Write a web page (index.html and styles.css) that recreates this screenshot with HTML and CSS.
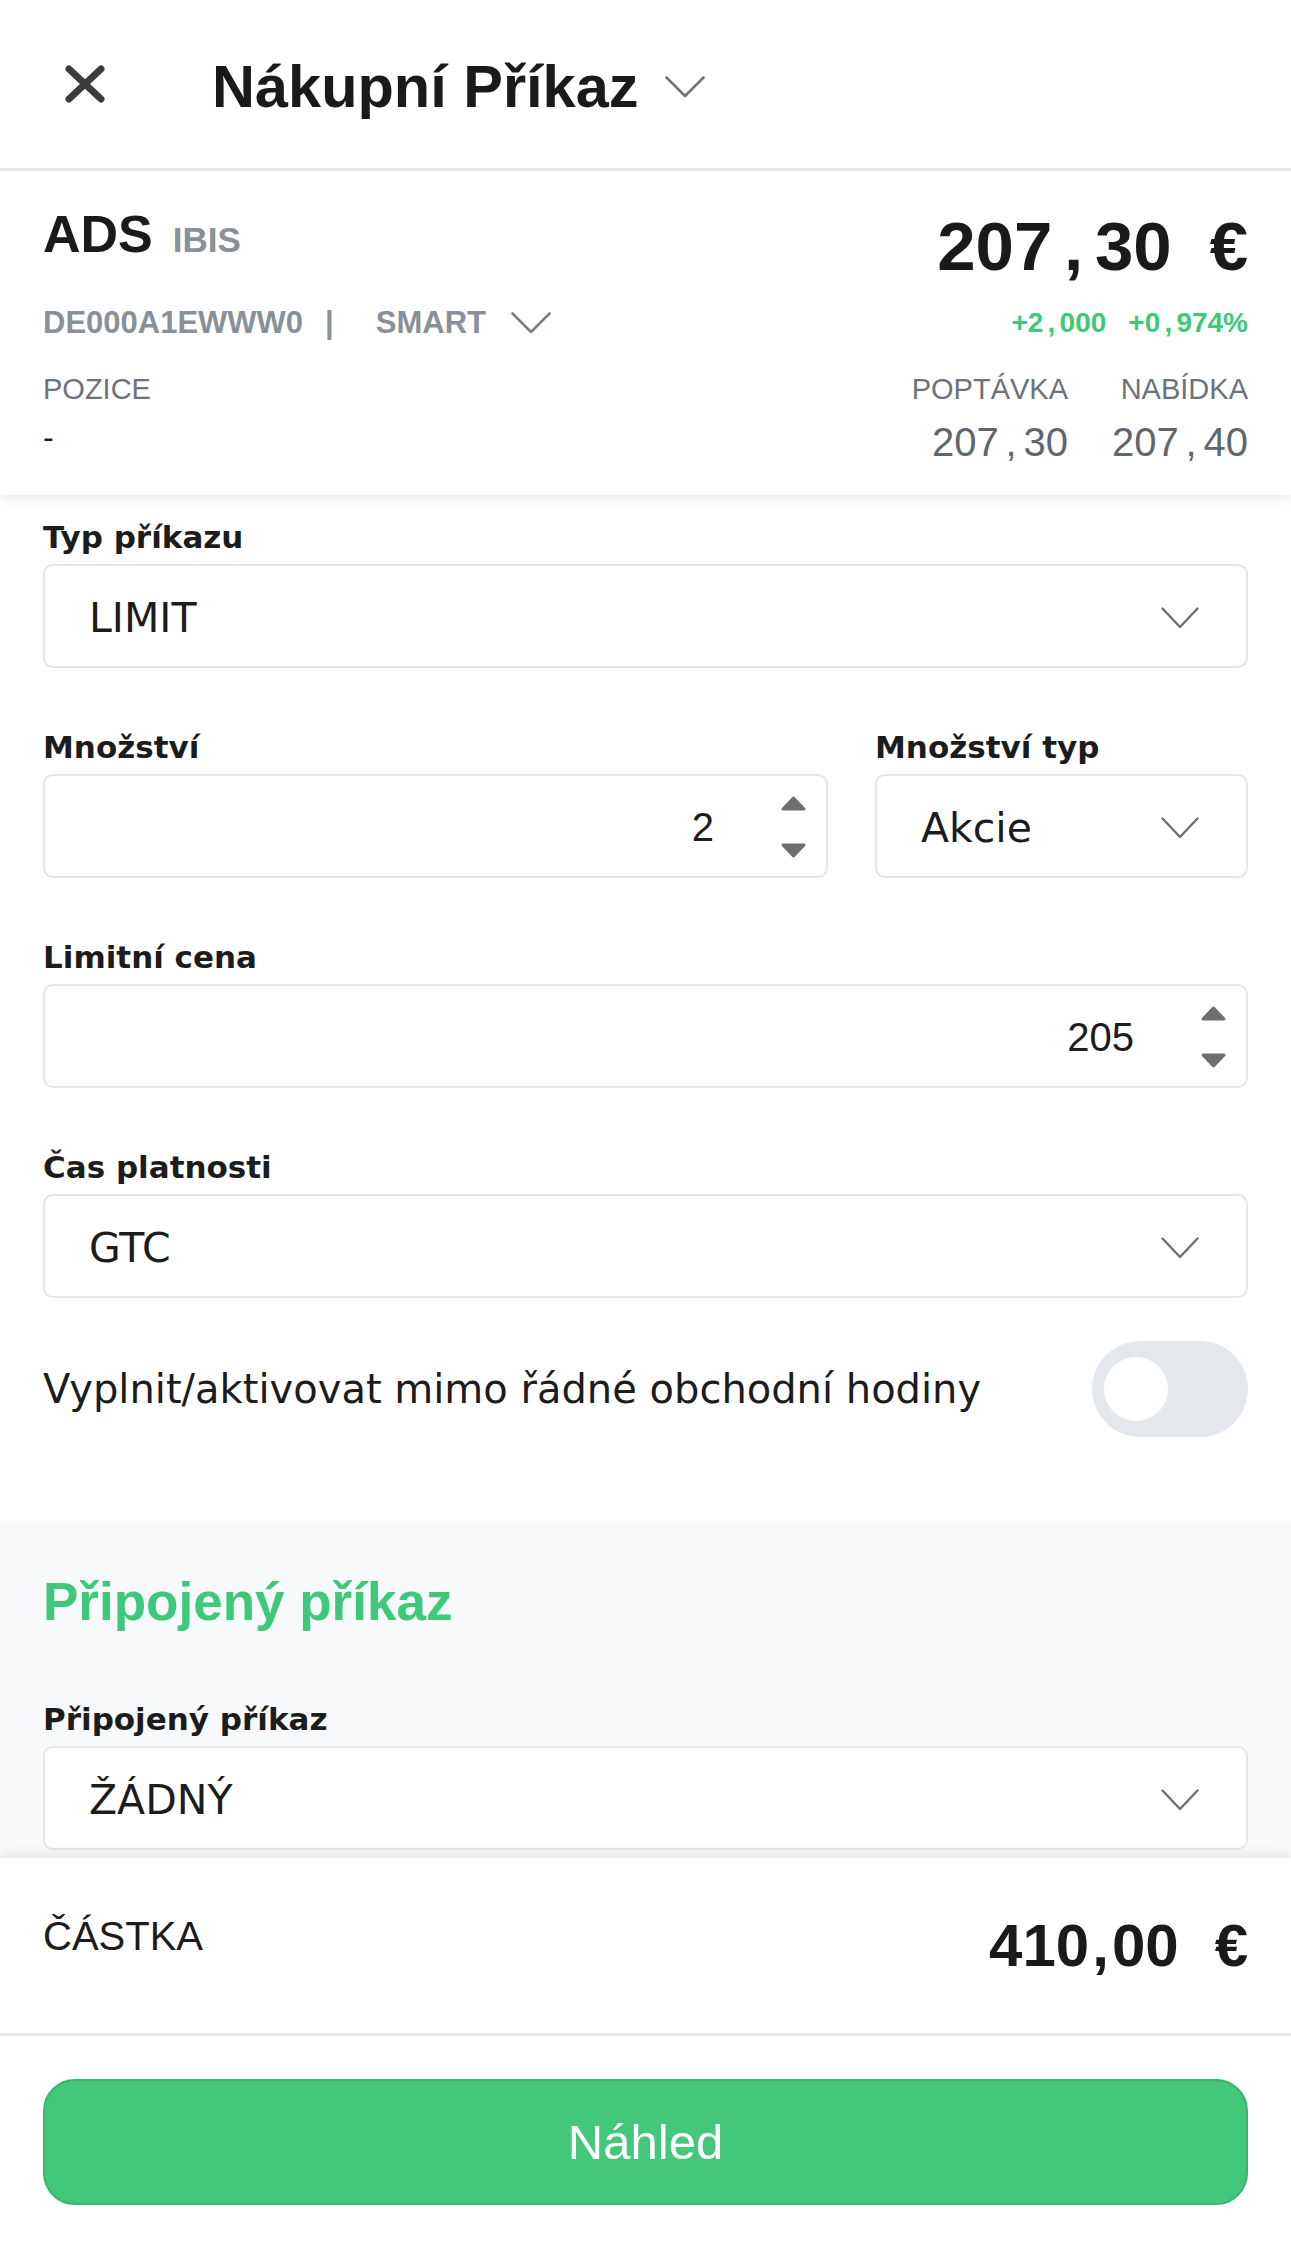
FILE: index.html
```html
<!DOCTYPE html>
<html lang="cs">
<head>
<meta charset="utf-8">
<title>Nákupní Příkaz</title>
<link rel="stylesheet" href="styles.css">
</head>
<body>
<div class="app">
  <header class="topbar">
    <svg class="close" width="40" height="38" viewBox="0 0 40 38"><path d="M4 4 L36 34 M36 4 L4 34"/></svg>
    <h1 class="title">Nákupní Příkaz</h1>
    <svg class="chev chev-title" width="40" height="22" viewBox="0 0 40 22"><polyline points="1.5,1.5 20,20 38.5,1.5"/></svg>
  </header>

  <main class="content">
    <section class="card">
      <div class="card-row card-top">
        <div class="sym"><span class="ticker">ADS</span><span class="exch">IBIS</span></div>
        <div class="price">207<span class="c">,</span>30<span class="cur">€</span></div>
      </div>
      <div class="card-row card-mid">
        <div class="isin">DE000A1EWWW0<span class="bar">|</span>SMART<svg class="chev chev-smart" width="40" height="22" viewBox="0 0 40 22"><polyline points="1.5,1.5 20,20 38.5,1.5"/></svg></div>
        <div class="change"><span>+2<span class="c">,</span>000</span><span>+0<span class="c">,</span>974%</span></div>
      </div>
      <div class="card-row card-bottom">
        <div class="pos">
          <div class="cap">POZICE</div>
          <div class="dash">-</div>
        </div>
        <div class="quotes">
          <div class="q">
            <div class="cap">POPTÁVKA</div>
            <div class="qv">207<span class="c">,</span>30</div>
          </div>
          <div class="q">
            <div class="cap">NABÍDKA</div>
            <div class="qv">207<span class="c">,</span>40</div>
          </div>
        </div>
      </div>
    </section>

    <section class="form">
      <div class="field">
        <div class="label">Typ příkazu</div>
        <div class="box select">
          <span class="val">LIMIT</span>
          <svg class="chev chev-sel" width="38" height="22" viewBox="0 0 38 22"><polyline points="1.5,1.5 19,20 36.5,1.5"/></svg>
        </div>
      </div>

      <div class="field-pair">
        <div class="field">
          <div class="label">Množství</div>
          <div class="box number">
            <span class="num">2</span>
            <svg class="spin" width="27" height="62" viewBox="0 0 27 62"><polygon points="3,13 13.5,2 24,13"/><polygon points="3,49 13.5,60 24,49"/></svg>
          </div>
        </div>
        <div class="field">
          <div class="label">Množství typ</div>
          <div class="box select">
            <span class="val">Akcie</span>
            <svg class="chev chev-sel" width="38" height="22" viewBox="0 0 38 22"><polyline points="1.5,1.5 19,20 36.5,1.5"/></svg>
          </div>
        </div>
      </div>

      <div class="field">
        <div class="label">Limitní cena</div>
        <div class="box number">
          <span class="num">205</span>
          <svg class="spin" width="27" height="62" viewBox="0 0 27 62"><polygon points="3,13 13.5,2 24,13"/><polygon points="3,49 13.5,60 24,49"/></svg>
        </div>
      </div>

      <div class="field field-last">
        <div class="label">Čas platnosti</div>
        <div class="box select">
          <span class="val">GTC</span>
          <svg class="chev chev-sel" width="38" height="22" viewBox="0 0 38 22"><polyline points="1.5,1.5 19,20 36.5,1.5"/></svg>
        </div>
      </div>

      <div class="toggle-row">
        <span class="toggle-text">Vyplnit/aktivovat mimo řádné obchodní hodiny</span>
        <span class="toggle"><span class="knob"></span></span>
      </div>
    </section>

    <section class="attached">
      <h2 class="attached-title">Připojený příkaz</h2>
      <div class="field">
        <div class="label">Připojený příkaz</div>
        <div class="box select">
          <span class="val">ŽÁDNÝ</span>
          <svg class="chev chev-sel" width="38" height="22" viewBox="0 0 38 22"><polyline points="1.5,1.5 19,20 36.5,1.5"/></svg>
        </div>
      </div>
    </section>
  </main>

  <footer class="footer">
    <div class="amount-row">
      <span class="amount-label">ČÁSTKA</span>
      <span class="amount">410<span class="c2">,</span>00<span class="cur2">€</span></span>
    </div>
    <div class="btn-area">
      <button class="btn">Náhled</button>
    </div>
  </footer>
</div>
</body>
</html>
```

FILE: styles.css
```css
* { box-sizing: border-box; }

html, body {
  margin: 0;
  padding: 0;
  background: #ffffff;
}

body {
  font-family: "Liberation Sans", Arial, sans-serif;
  color: #1b1b1b;
}

.app {
  width: 1291px;
  height: 2246px;
  display: flex;
  flex-direction: column;
  overflow: hidden;
}

/* ---------- top bar ---------- */
.topbar {
  height: 171px;
  flex: none;
  display: flex;
  align-items: center;
  padding: 5px 0 0 65px;
  border-bottom: 3px solid #e6e7ea;
  background: #fff;
}

.close {
  margin-top: -5px;
  flex: none;
}
.close path {
  stroke: #3c3c3c;
  stroke-width: 7;
  stroke-linecap: round;
  fill: none;
}

.title {
  margin: 0 0 0 107px;
  font-family: "Liberation Sans", Arial, sans-serif;
  font-weight: 700;
  font-size: 59.5px;
  line-height: 68px;
  color: #1a1a1a;
}

.chev polyline {
  fill: none;
  stroke: #747474;
  stroke-width: 2.6;
  stroke-linecap: round;
  stroke-linejoin: round;
}

.chev-title {
  margin-left: 26px;
  flex: none;
}

/* ---------- content ---------- */
.content {
  flex: 1;
  min-height: 0;
  overflow: hidden;
  display: flex;
  flex-direction: column;
}

.card {
  position: relative;
  z-index: 2;
  flex: none;
  background: #fff;
  padding: 36px 43px 29px 43px;
  box-shadow: 0 5px 10px rgba(0, 0, 0, 0.07);
}

.card-row {
  display: flex;
  justify-content: space-between;
  align-items: flex-start;
}

.sym {
  font-size: 52px;
  line-height: 54px;
}
.ticker {
  font-weight: 700;
  font-size: 52px;
  color: #1a1a1a;
}
.exch {
  font-weight: 700;
  font-size: 35px;
  color: #8a9097;
  margin-left: 20px;
}

.price {
  font-weight: 700;
  font-size: 69px;
  line-height: 80px;
  color: #1a1a1a;
}
.c {
  margin: 0 0.17em;
}
.cur {
  margin-left: 0.55em;
}

.card-mid {
  margin-top: 16px;
  height: 40px;
}

.isin {
  display: flex;
  align-items: center;
  font-weight: 700;
  font-size: 31px;
  line-height: 40px;
  color: #8a9097;
}
.bar {
  margin: 0 42px 0 22px;
}
.chev-smart {
  margin-left: 25px;
}
.chev-smart polyline {
  stroke: #7a7f85;
}

.change {
  display: flex;
  gap: 22px;
  font-weight: 700;
  font-size: 28px;
  line-height: 40px;
  color: #3ec87a;
}
.change .c {
  margin: 0 0.15em;
}

.card-bottom {
  margin-top: 28px;
}

.cap {
  font-size: 29px;
  line-height: 36px;
  color: #6c737a;
}

.dash {
  margin-top: 7px;
  font-size: 32px;
  line-height: 46px;
  color: #1a1a1a;
}

.quotes {
  display: flex;
  gap: 44px;
}
.q {
  text-align: right;
}
.qv {
  margin-top: 11px;
  font-size: 40px;
  line-height: 48px;
  color: #5f666e;
}

/* ---------- form ---------- */
.form {
  flex: none;
  padding: 22px 43px 0 43px;
}

.field {
  margin-bottom: 59px;
}
.field-last {
  margin-bottom: 43px;
}

.label {
  font-family: "DejaVu Sans", sans-serif;
  font-weight: 700;
  font-size: 31px;
  line-height: 40px;
  color: #1c1c1c;
  margin-bottom: 7px;
}

.box {
  height: 104px;
  background: #fff;
  border: 2px solid #e3e6ea;
  border-radius: 10px;
  display: flex;
  align-items: center;
}

.select {
  padding: 4px 47px 0 44px;
  justify-content: space-between;
}

.val {
  font-family: "DejaVu Sans", sans-serif;
  font-size: 41px;
  line-height: 50px;
  color: #1c1c1c;
}

.chev-sel polyline {
  stroke: #6f6f6f;
  stroke-width: 2.4;
}

.number {
  padding: 2px 19px 0 44px;
}
.num {
  flex: 1;
  text-align: right;
  font-size: 40px;
  line-height: 50px;
  color: #1c1c1c;
}
.spin {
  margin-left: 66px;
  flex: none;
}
.spin polygon {
  fill: #6f6f6f;
  stroke: #6f6f6f;
  stroke-width: 3;
  stroke-linejoin: round;
}

.field-pair {
  display: grid;
  grid-template-columns: 1fr 373px;
  column-gap: 47px;
}

.toggle-row {
  display: flex;
  justify-content: space-between;
  align-items: center;
  margin-bottom: 84px;
}
.toggle-text {
  font-family: "DejaVu Sans", sans-serif;
  font-size: 40px;
  line-height: 50px;
  color: #1c1c1c;
}
.toggle {
  width: 156px;
  height: 96px;
  border-radius: 48px;
  background: #e4e7eb;
  display: flex;
  align-items: center;
  padding-left: 12px;
  flex: none;
}
.knob {
  width: 64px;
  height: 64px;
  border-radius: 50%;
  background: #fff;
}

/* ---------- attached order ---------- */
.attached {
  flex: 1;
  background: #f8f9fa;
  padding: 50px 43px 200px 43px;
}
.attached-title {
  margin: 0 0 66px 0;
  font-family: "Liberation Sans", Arial, sans-serif;
  font-weight: 700;
  font-size: 53px;
  line-height: 62px;
  color: #3ec87a;
}

/* ---------- footer ---------- */
.footer {
  flex: none;
  height: 388px;
  position: relative;
  z-index: 3;
  background: #fff;
  box-shadow: 0 -4px 12px rgba(0, 0, 0, 0.08);
}

.amount-row {
  height: 178px;
  display: flex;
  justify-content: space-between;
  align-items: flex-start;
  padding: 53px 43px 0 43px;
  border-bottom: 3px solid #e6e7ea;
}
.amount-label {
  font-size: 40px;
  line-height: 50px;
  color: #1c1c1c;
}
.amount {
  font-weight: 700;
  font-size: 60px;
  line-height: 70px;
  color: #1a1a1a;
}
.c2 {
  margin: 0 0.05em;
}
.cur2 {
  margin-left: 0.6em;
}

.btn-area {
  padding: 43px 43px 41px 43px;
}
.btn {
  display: flex;
  width: 100%;
  height: 126px;
  align-items: center;
  justify-content: center;
  background: #43c77b;
  border: 2px solid #3ab56e;
  border-radius: 32px;
  color: #ffffff;
  font-family: "Liberation Sans", Arial, sans-serif;
  font-size: 49px;
  padding: 0;
}
```
